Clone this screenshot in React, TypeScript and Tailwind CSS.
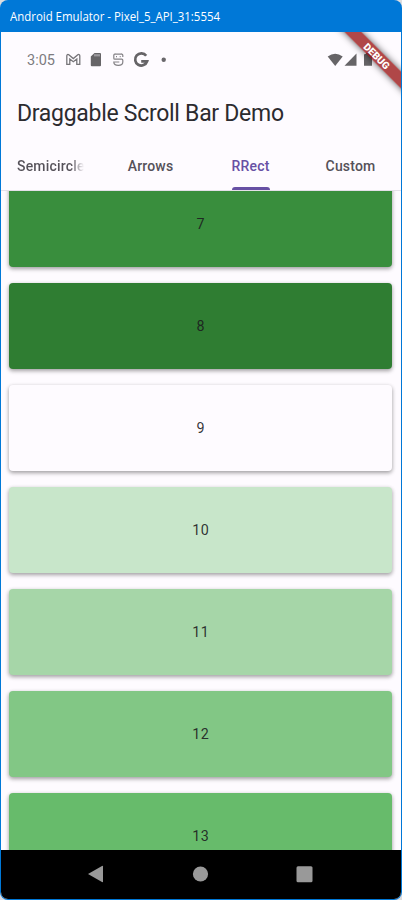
const cards = [
  { n: 7, bg: "bg-[#398e3d]" },
  { n: 8, bg: "bg-[#2f7d32]" },
  { n: 9, bg: "bg-[#fefbff]" },
  { n: 10, bg: "bg-[#c8e6ca]" },
  { n: 11, bg: "bg-[#a6d6a8]" },
  { n: 12, bg: "bg-[#82c785]" },
  { n: 13, bg: "bg-[#67bb6b]" },
];

function StatusBar() {
  return (
    <div className="flex h-[56px] shrink-0 items-center pl-[26px] text-[#666467]">
      <svg width="144" height="24" viewBox="0 0 144 24" fill="none">
        <text x="0" y="17" fontSize="14.500" textLength="28" fill="#7d7b7f" fontFamily="Roboto">3:05</text>
        <path d="M39.800 16.300V7.700c0-1.200 1.200-1.600 2-.9l4.500 3.800 4.500-3.800c.8-.7 2-.3 2 .9v8.600h-3v-5.300l-3.500 2.700-3.500-2.700v5.300z" stroke="#777579" strokeWidth="1.300" />
        <path d="M67.500 5H73q1 0 1 1v11.200q0 1-1 1h-8.200q-1 0-1-1V8.500z" fill="#666467" />
        <path d="M68 6.200v2.200M70 6.200v2.200M72 6.200v2.200" stroke="#eeeaf0" strokeWidth=".8" />
        <path d="M88 6.300l.3-1M94.500 6.300l-.3-1M95.800 9V7.200q0-1-1-1h-7q-1 0-1 1v3q0 1 1 1h7q1 0 1 1V14c0 4.500-9 4.500-9 0h5.500M89 8.600h1M92.700 8.600h1" stroke="#858387" strokeWidth="1.200" />
        <path d="M119.200 7.500a6.100 6.100 0 1 0 .9 5.500h-5.900" transform="translate(0 .3)" stroke="#666467" strokeWidth="2.700" />
        <circle cx="136.700" cy="11.700" r="2.200" fill="#69676b" />
      </svg>
      <svg className="ml-[156px]" width="48" height="16" viewBox="0 0 48 16" fill="#666467">
        <path d="M.7 4.600Q8.200-1.200 15.700 4.600L8.200 14Z" />
        <path d="M29.500 1.500v12.300H17.500Z" />
        <path d="M37 3q0-1 1-1h1V.8h3.500V2H44q1 0 1 1v10.800h-8z" />
      </svg>
    </div>
  );
}

export default function App() {
  return (
    <div className="h-[900px] w-[402px] overflow-hidden bg-[#dddddf] font-['Roboto',sans-serif]">
      <div className="relative flex h-full flex-col overflow-hidden rounded-[8px] bg-[#0078d7] px-px pb-px">
        <header className="flex h-8 shrink-0 items-center pl-[9px] font-['Open_Sans','Noto_Sans',sans-serif] text-[12px] text-white">
          <svg width="220" height="28" fill="white">
            <text x="0" y="19" textLength="210" lengthAdjust="spacingAndGlyphs">Android Emulator - Pixel_5_API_31:5554</text>
          </svg>
        </header>
        <main className="flex min-h-0 flex-1 flex-col overflow-hidden rounded-b-[7px] bg-[#fefbff]">
          <StatusBar />
          <div className="flex h-[52px] shrink-0 items-center pl-4 text-[#2c2b2f]">
            <svg width="270" height="32" fill="currentColor">
              <text x="0" y="23.200" fontSize="23" textLength="267">Draggable Scroll Bar Demo</text>
            </svg>
          </div>
          <nav className="grid h-[51px] shrink-0 grid-cols-4 border-b border-[#e4e0e8] text-[14px] font-medium tracking-[0.18px] text-[#555159]">
            <div className="flex items-center justify-center pt-0.5 pr-px">
              <span className="w-[67px] overflow-hidden bg-linear-to-r from-[#555159] from-80% to-transparent bg-clip-text whitespace-nowrap text-transparent">Semicircle</span>
            </div>
            <div className="flex items-center justify-center pt-0.5 pr-px">Arrows</div>
            <div className="flex flex-col items-center text-[#6750a4]">
              <span className="flex flex-1 items-center pt-[5px] pr-px">RRect</span>
              <span className="h-[3px] w-[38px] rounded-t-[3px] bg-[#6750a4]" />
            </div>
            <div className="flex items-center justify-center pt-0.5 pr-px">Custom</div>
          </nav>
          <div className="min-h-0 flex-1 overflow-hidden px-2">
            <div className="-mt-[10px] flex w-[383.400px] flex-col gap-[16.400px]">
              {cards.map((c) => (
                <div key={c.n} className={`flex h-[85.600px] shrink-0 items-center justify-center rounded-[4px] pt-0.5 text-[14.300px] tracking-[0.4px] text-[#1c1b1f]/90 shadow-[0_2px_4px_rgba(0,0,0,0.3),0_1px_4px_rgba(0,0,0,0.12)] ${c.bg}`}>
                  {c.n}
                </div>
              ))}
            </div>
          </div>
          <footer className="flex h-[49px] shrink-0 items-center bg-black pb-px pl-[87px]">
            <svg width="226" height="18" viewBox="0 0 226 18" fill="#999">
              <path d="M0 9 14 1Q15 .5 15 1.500v15q0 1-1 .5Z" />
              <circle cx="112.500" cy="9" r="7.600" />
              <rect x="208.500" y="1.200" width="16" height="16" rx="1.500" />
            </svg>
          </footer>
        </main>
        <div className="absolute top-8 right-px h-[75px] w-[75px] overflow-hidden">
          <div className="absolute top-[18px] -left-[9.500px] flex h-[12px] w-[120px] rotate-45 items-center justify-center bg-[#940808]/74 text-[10px] font-black text-white shadow-[0_0_7px_rgba(0,0,0,0.65)]">
            DEBUG
          </div>
        </div>
      </div>
    </div>
  );
}
